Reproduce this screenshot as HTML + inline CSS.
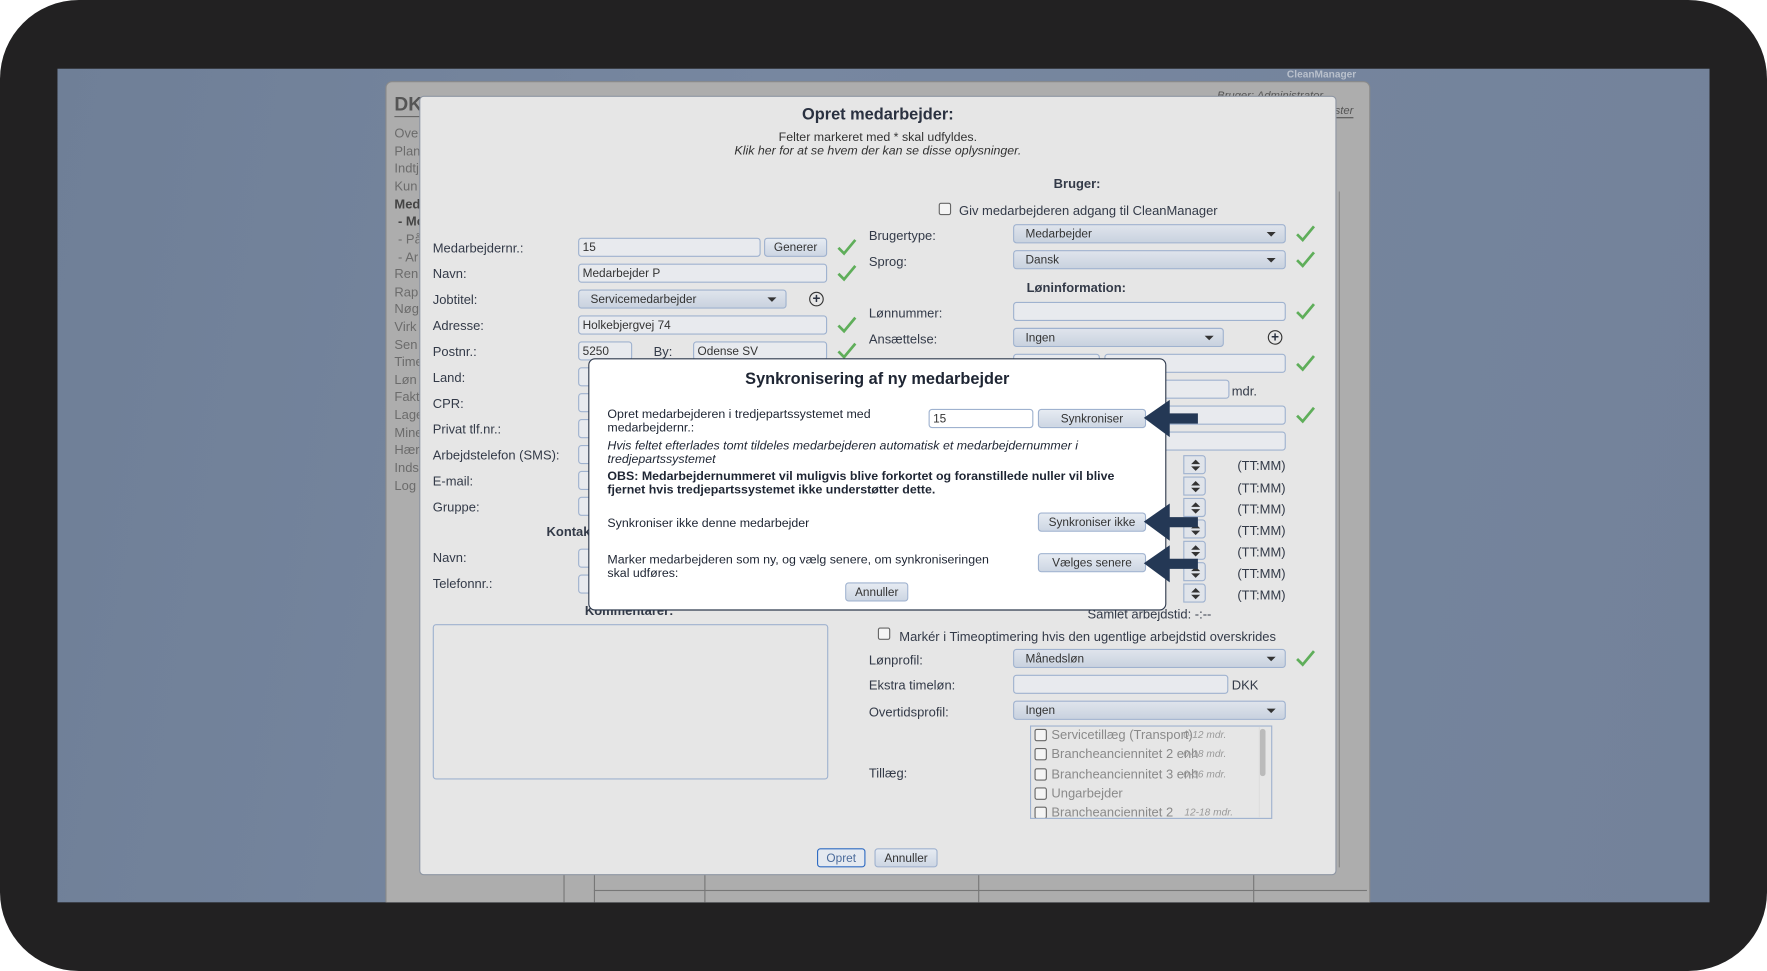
<!DOCTYPE html>
<html><head><meta charset="utf-8"><style>
html,body{margin:0;padding:0;background:#fff;width:1767px;height:971px;overflow:hidden}
#s{position:absolute;left:0;top:0;width:1568px;height:862px;transform:scale(1.12691,1.1265);transform-origin:0 0;font-family:"Liberation Sans",sans-serif;color:#2a3140}
#s div{position:absolute;box-sizing:border-box}
.frame{left:0;top:0;width:1568px;height:862px;background:#222122;border-radius:70px}
.scr{left:51px;top:61px;width:1466px;height:740px;background:linear-gradient(100deg,#6f7f97,#7787a0 40%,#73829a);overflow:hidden}
.app{left:291px;top:11px;width:874px;height:740px;background:#adadad;border:1px solid #8a8a8a;border-radius:6px}
.nav{font-size:11.5px;color:#6b6b6b;left:350px;white-space:nowrap;margin-top:1px}
.modal{left:372px;top:85px;width:814px;height:692px;background:#e6e6e6;border:1px solid #8e96a3;border-radius:4px}
.l{font-size:11.5px;color:#333a48;white-space:nowrap;margin-top:2px}
.b{font-weight:bold}
.in{height:17px;background:#e8eaee;border:1px solid #9fb2cf;border-radius:3px;font-size:10.5px;padding:2px 3px 0;color:#333;line-height:13px}
.sel{height:17px;background:linear-gradient(#dfe4ec,#c9d2df);border:1px solid #9fb2cf;border-radius:3px;font-size:10.5px;padding:2px 10px 0;color:#333;line-height:13px}
.sel:after{content:"";position:absolute;right:8px;top:6px;border-left:4px solid transparent;border-right:4px solid transparent;border-top:4px solid #333}
.btn{height:17px;background:linear-gradient(#e6ebf2,#cdd6e3);border:1px solid #9fb2cf;border-radius:3px;font-size:10.5px;text-align:center;line-height:16px;color:#333}
.cb{width:11px;height:11px;border:1px solid #666;border-radius:2px;background:#f4f4f4}
.plus{width:13px;height:13px;border:1.3px solid #333;border-radius:50%;font-size:12px;line-height:10px;text-align:center;font-weight:bold}
.sp{width:20px;height:17px;border:1px solid #9fb2cf;border-radius:0 3px 3px 0;background:#e0e4ea}
.sp:before{content:"";position:absolute;left:6px;top:3px;border-left:4px solid transparent;border-right:4px solid transparent;border-bottom:4px solid #333}
.sp:after{content:"";position:absolute;left:6px;top:9px;border-left:4px solid transparent;border-right:4px solid transparent;border-top:4px solid #333}
.dlg{left:522px;top:318px;width:513px;height:224px;background:#fff;border:1px solid #2f3a4d;border-radius:6px}
.d{font-size:11px;color:#1e2533;white-space:nowrap;margin-top:2px}
</style></head><body><div id="s">
<div class="frame"></div>
<div class="scr"><div class="app"></div>
<div style="left:449px;top:715px;height:25px;border-left:1px solid #777"></div>
<div style="left:476px;top:715px;height:25px;border-left:1px solid #777"></div>
<div style="left:574px;top:715px;height:25px;border-left:1px solid #777"></div>
<div style="left:817px;top:715px;height:25px;border-left:1px solid #777"></div>
<div style="left:1061px;top:715px;height:25px;border-left:1px solid #777"></div>
<div style="left:476px;top:729px;width:686px;border-top:1px solid #777"></div>
</div>
<div style="left:1142px;top:61px;font-size:9px;font-weight:bold;color:#b9c0cc">CleanManager</div>
<div style="left:1080px;top:80px;font-size:10px;font-style:italic;color:#555;white-space:nowrap">Bruger: Administrator</div>
<div style="left:1150px;top:93px;font-size:10px;font-style:italic;color:#555;border-bottom:1px solid #555">Webmaster</div>
<div style="left:350px;top:83px;font-size:17px;font-weight:bold;color:#555">DK</div>
<div style="left:350px;top:103px;width:30px;border-top:1px solid #666"></div>
<div class="nav" style="top:112px">Ove</div><div class="nav" style="top:128px">Plan</div><div class="nav" style="top:143px">Indtj</div><div class="nav" style="top:159px">Kun</div><div class="nav b" style="top:175px;color:#444">Med</div><div class="nav b" style="top:190px;color:#444">&nbsp;- Mo</div><div class="nav" style="top:206px">&nbsp;- På</div><div class="nav" style="top:222px">&nbsp;- Ar</div><div class="nav" style="top:237px">Ren</div><div class="nav" style="top:253px">Rap</div><div class="nav" style="top:268px">Nøg</div><div class="nav" style="top:284px">Virk</div><div class="nav" style="top:300px">Sen</div><div class="nav" style="top:315px">Time</div><div class="nav" style="top:331px">Løn</div><div class="nav" style="top:346px">Fakt</div><div class="nav" style="top:362px">Lage</div><div class="nav" style="top:378px">Mine</div><div class="nav" style="top:393px">Hær</div><div class="nav" style="top:409px">Inds</div><div class="nav" style="top:425px">Log</div>
<div style="left:1188px;top:170px;width:1px;height:600px;border-left:1px solid #888"></div>

<div class="modal"></div>
<div style="left:372px;top:94px;width:814px;text-align:center;font-size:14.5px;font-weight:bold;color:#2a3140">Opret medarbejder:</div>
<div style="left:372px;top:116px;width:814px;text-align:center;font-size:11px;color:#333">Felter markeret med * skal udfyldes.</div>
<div style="left:372px;top:128px;width:814px;text-align:center;font-size:11px;font-style:italic;color:#333">Klik her for at se hvem der kan se disse oplysninger.</div>

<div class="l" style="left:384px;top:213px">Medarbejdernr.:</div>
<div class="l" style="left:384px;top:236px">Navn:</div>
<div class="l" style="left:384px;top:259px">Jobtitel:</div>
<div class="l" style="left:384px;top:282px">Adresse:</div>
<div class="l" style="left:384px;top:305px">Postnr.:</div>
<div class="l" style="left:384px;top:328px">Land:</div>
<div class="l" style="left:384px;top:351px">CPR:</div>
<div class="l" style="left:384px;top:374px">Privat tlf.nr.:</div>
<div class="l" style="left:384px;top:397px">Arbejdstelefon (SMS):</div>
<div class="l" style="left:384px;top:420px">E-mail:</div>
<div class="l" style="left:384px;top:443px">Gruppe:</div>
<div class="l b" style="left:485px;top:465px">Kontakt</div>
<div class="l" style="left:384px;top:488px">Navn:</div>
<div class="l" style="left:384px;top:511px">Telefonnr.:</div>
<div class="l b" style="left:519px;top:535px">Kommentarer:</div>
<div style="left:384px;top:554px;width:351px;height:138px;border:1px solid #9fb2cf;border-radius:3px;background:#e6e6e6"></div>

<div class="in" style="left:513px;top:211px;width:162px">15</div>
<div class="btn" style="left:678px;top:211px;width:56px">Generer</div>
<div class="in" style="left:513px;top:234px;width:221px">Medarbejder P</div>
<div class="sel" style="left:513px;top:257px;width:185px">Servicemedarbejder</div>
<div class="plus" style="left:718px;top:259px">+</div>
<div class="in" style="left:513px;top:280px;width:221px">Holkebjergvej 74</div>
<div class="in" style="left:513px;top:303px;width:48px">5250</div>
<div class="l" style="left:580px;top:305px">By:</div>
<div class="in" style="left:615px;top:303px;width:119px">Odense SV</div>
<div class="in" style="left:513px;top:326px;width:15px"></div>
<div class="in" style="left:513px;top:349px;width:15px"></div>
<div class="in" style="left:513px;top:372px;width:15px"></div>
<div class="in" style="left:513px;top:395px;width:15px"></div>
<div class="in" style="left:513px;top:418px;width:15px"></div>
<div class="in" style="left:513px;top:441px;width:15px"></div>
<div class="in" style="left:513px;top:487px;width:15px"></div>
<div class="in" style="left:513px;top:510px;width:15px"></div>

<svg style="position:absolute;left:0;top:0" width="1568" height="862">
<defs><path id="c" d="M0 8 L5 13 L15 1" fill="none" stroke="#5fae5a" stroke-width="2.4"/></defs>
<use href="#c" x="744" y="212"/><use href="#c" x="744" y="235"/><use href="#c" x="744" y="281"/><use href="#c" x="744" y="304"/>
<use href="#c" x="1151" y="200"/><use href="#c" x="1151" y="223"/><use href="#c" x="1151" y="269"/><use href="#c" x="1151" y="315"/><use href="#c" x="1151" y="361"/><use href="#c" x="1151" y="577"/>
</svg>

<div class="l b" style="left:935px;top:156px">Bruger:</div>
<div class="cb" style="left:833px;top:180px"></div>
<div class="l" style="left:851px;top:180px">Giv medarbejderen adgang til CleanManager</div>
<div class="l" style="left:771px;top:202px">Brugertype:</div>
<div class="l" style="left:771px;top:225px">Sprog:</div>
<div class="sel" style="left:899px;top:199px;width:242px">Medarbejder</div>
<div class="sel" style="left:899px;top:222px;width:242px">Dansk</div>
<div class="l b" style="left:911px;top:248px">Løninformation:</div>
<div class="l" style="left:771px;top:271px">Lønnummer:</div>
<div class="in" style="left:899px;top:268px;width:242px"></div>
<div class="l" style="left:771px;top:294px">Ansættelse:</div>
<div class="sel" style="left:899px;top:291px;width:187px">Ingen</div>
<div class="plus" style="left:1125px;top:293px">+</div>
<div class="in" style="left:899px;top:314px;width:77px"></div>
<div class="in" style="left:980px;top:314px;width:161px"></div>
<div class="in" style="left:1000px;top:337px;width:91px"></div>
<div class="l" style="left:1093px;top:340px">mdr.</div>
<div class="in" style="left:1000px;top:360px;width:141px"></div>
<div class="in" style="left:1000px;top:383px;width:141px"></div>
<div class="sp" style="left:1050px;top:404px"></div><div class="l" style="left:1098px;top:406px">(TT:MM)</div>
<div class="sp" style="left:1050px;top:423px"></div><div class="l" style="left:1098px;top:426px">(TT:MM)</div>
<div class="sp" style="left:1050px;top:442px"></div><div class="l" style="left:1098px;top:445px">(TT:MM)</div>
<div class="sp" style="left:1050px;top:461px"></div><div class="l" style="left:1098px;top:464px">(TT:MM)</div>
<div class="sp" style="left:1050px;top:480px"></div><div class="l" style="left:1098px;top:483px">(TT:MM)</div>
<div class="sp" style="left:1050px;top:499px"></div><div class="l" style="left:1098px;top:502px">(TT:MM)</div>
<div class="sp" style="left:1050px;top:518px"></div><div class="l" style="left:1098px;top:521px">(TT:MM)</div>
<div class="l" style="left:965px;top:538px">Samlet arbejdstid: -:--</div>
<div class="cb" style="left:779px;top:557px"></div>
<div class="l" style="left:798px;top:558px">Markér i Timeoptimering hvis den ugentlige arbejdstid overskrides</div>
<div class="l" style="left:771px;top:579px">Lønprofil:</div>
<div class="sel" style="left:899px;top:576px;width:242px">Månedsløn</div>
<div class="l" style="left:771px;top:601px">Ekstra timeløn:</div>
<div class="in" style="left:899px;top:599px;width:191px"></div>
<div class="l" style="left:1093px;top:601px">DKK</div>
<div class="l" style="left:771px;top:625px">Overtidsprofil:</div>
<div class="sel" style="left:899px;top:622px;width:242px">Ingen</div>
<div class="l" style="left:771px;top:679px">Tillæg:</div>
<div style="left:914px;top:644px;width:215px;height:83px;border:1px solid #9fb2cf;overflow:hidden">
 <div style="left:203px;top:2px;width:5px;height:42px;background:#bbb;border-radius:3px"></div>
 <div style="left:202px;top:0;height:82px;border-left:1px solid #ddd"></div>
</div>
<div class="cb" style="left:918px;top:647px"></div><div class="l" style="left:933px;top:645px;color:#8a8a8a">Servicetillæg (Transport)</div><div style="left:1050px;top:647px;font-size:9px;font-style:italic;color:#999">0-12 mdr.</div>
<div class="cb" style="left:918px;top:664px"></div><div class="l" style="left:933px;top:662px;color:#8a8a8a">Brancheanciennitet 2 enh</div><div style="left:1050px;top:664px;font-size:9px;font-style:italic;color:#999">0-18 mdr.</div>
<div class="cb" style="left:918px;top:682px"></div><div class="l" style="left:933px;top:680px;color:#8a8a8a">Brancheanciennitet 3 enh</div><div style="left:1050px;top:682px;font-size:9px;font-style:italic;color:#999">0-36 mdr.</div>
<div class="cb" style="left:918px;top:699px"></div><div class="l" style="left:933px;top:697px;color:#8a8a8a">Ungarbejder</div>
<div style="left:915px;top:714px;width:200px;height:12px;overflow:hidden"><div class="cb" style="left:3px;top:2px"></div><div class="l" style="left:18px;top:0px;color:#8a8a8a">Brancheanciennitet 2</div><div style="left:136px;top:2px;font-size:9px;font-style:italic;color:#999">12-18 mdr.</div></div>

<div class="btn" style="left:725px;top:753px;width:43px;border:1.5px solid #2f6bc2;color:#4a6a9a;background:#e4e9f0">Opret</div>
<div class="btn" style="left:776px;top:753px;width:56px">Annuller</div>

<div class="dlg"></div>
<div style="left:522px;top:329px;width:513px;text-align:center;font-size:14.5px;font-weight:bold;color:#1e2533">Synkronisering af ny medarbejder</div>
<div class="d" style="left:539px;top:360px;line-height:12px">Opret medarbejderen i tredjepartssystemet med<br>medarbejdernr.:</div>
<div class="in" style="left:824px;top:363px;width:93px;background:#fff">15</div>
<div class="btn" style="left:921px;top:363px;width:96px">Synkroniser</div>
<div class="d" style="left:539px;top:388px;line-height:12px;font-style:italic">Hvis feltet efterlades tomt tildeles medarbejderen automatisk et medarbejdernummer i<br>tredjepartssystemet</div>
<div class="d" style="left:539px;top:415px;line-height:12px;font-weight:bold">OBS: Medarbejdernummeret vil muligvis blive forkortet og foranstillede nuller vil blive<br>fjernet hvis tredjepartssystemet ikke understøtter dette.</div>
<div class="d" style="left:539px;top:457px">Synkroniser ikke denne medarbejder</div>
<div class="btn" style="left:921px;top:455px;width:96px">Synkroniser ikke</div>
<div class="d" style="left:539px;top:489px;line-height:12px">Marker medarbejderen som ny, og vælg senere, om synkroniseringen<br>skal udføres:</div>
<div class="btn" style="left:921px;top:491px;width:96px">Vælges senere</div>
<div class="btn" style="left:750px;top:517px;width:56px">Annuller</div>
<svg style="position:absolute;left:0;top:0" width="1568" height="862">
<g fill="#243855">
<path d="M1015 371 L1038 355 L1038 367 L1063 367 L1063 376 L1038 376 L1038 388 Z"/>
<path d="M1015 463 L1038 447 L1038 459 L1063 459 L1063 468 L1038 468 L1038 480 Z"/>
<path d="M1015 500 L1038 484 L1038 496 L1063 496 L1063 505 L1038 505 L1038 517 Z"/>
</g></svg>
</div></body></html>
